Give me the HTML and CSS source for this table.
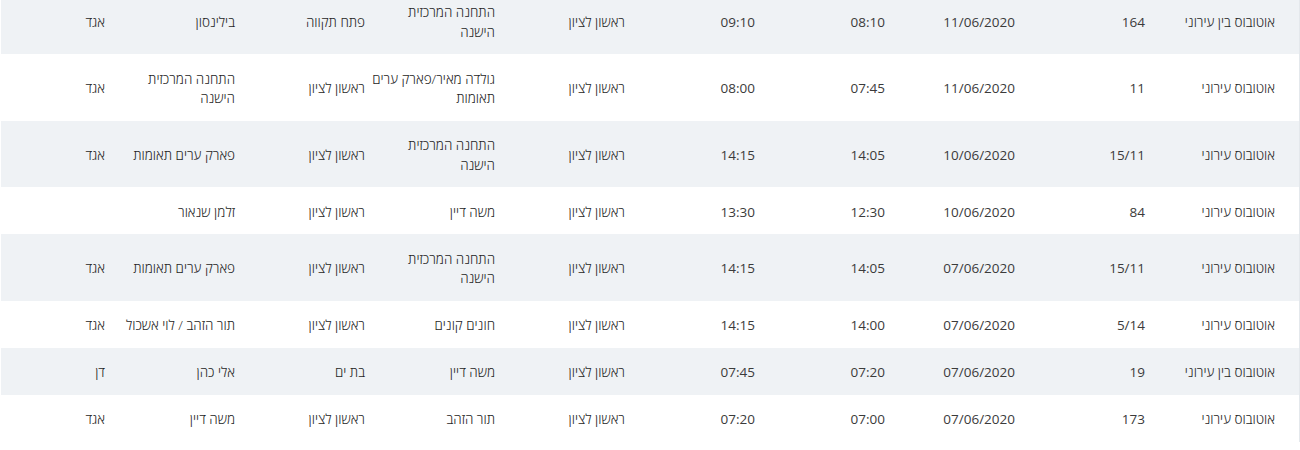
FILE: index.html
```html
<!DOCTYPE html>
<html lang="he" dir="rtl">
<head>
<meta charset="utf-8">
<title>נסיעות</title>
<link rel="stylesheet" href="styles.css">
</head>
<body>
<div class="table-wrap">
<table class="trips">
<colgroup>
<col class="c-first"><col class="c"><col class="c"><col class="c"><col class="c"><col class="c"><col class="c"><col class="c"><col class="c"><col class="c">
</colgroup>
<tbody>
<tr><td>אוטובוס בין עירוני</td><td class="num">164</td><td class="num">11/06/2020</td><td class="num">08:10</td><td class="num">09:10</td><td>ראשון לציון</td><td>התחנה המרכזית הישנה</td><td>פתח תקווה</td><td>בילינסון</td><td>אגד</td></tr>
<tr><td>אוטובוס עירוני</td><td class="num">11</td><td class="num">11/06/2020</td><td class="num">07:45</td><td class="num">08:00</td><td>ראשון לציון</td><td>גולדה מאיר/פארק ערים תאומות</td><td>ראשון לציון</td><td>התחנה המרכזית הישנה</td><td>אגד</td></tr>
<tr><td>אוטובוס עירוני</td><td class="num">15/11</td><td class="num">10/06/2020</td><td class="num">14:05</td><td class="num">14:15</td><td>ראשון לציון</td><td>התחנה המרכזית הישנה</td><td>ראשון לציון</td><td>פארק ערים תאומות</td><td>אגד</td></tr>
<tr><td>אוטובוס עירוני</td><td class="num">84</td><td class="num">10/06/2020</td><td class="num">12:30</td><td class="num">13:30</td><td>ראשון לציון</td><td>משה דיין</td><td>ראשון לציון</td><td>זלמן שנאור</td><td></td></tr>
<tr><td>אוטובוס עירוני</td><td class="num">15/11</td><td class="num">07/06/2020</td><td class="num">14:05</td><td class="num">14:15</td><td>ראשון לציון</td><td>התחנה המרכזית הישנה</td><td>ראשון לציון</td><td>פארק ערים תאומות</td><td>אגד</td></tr>
<tr><td>אוטובוס עירוני</td><td class="num">5/14</td><td class="num">07/06/2020</td><td class="num">14:00</td><td class="num">14:15</td><td>ראשון לציון</td><td>חונים קונים</td><td>ראשון לציון</td><td>תור הזהב / לוי אשכול</td><td>אגד</td></tr>
<tr><td>אוטובוס בין עירוני</td><td class="num">19</td><td class="num">07/06/2020</td><td class="num">07:20</td><td class="num">07:45</td><td>ראשון לציון</td><td>משה דיין</td><td>בת ים</td><td>אלי כהן</td><td>דן</td></tr>
<tr><td>אוטובוס עירוני</td><td class="num">173</td><td class="num">07/06/2020</td><td class="num">07:00</td><td class="num">07:20</td><td>ראשון לציון</td><td>תור הזהב</td><td>ראשון לציון</td><td>משה דיין</td><td>אגד</td></tr>
</tbody>
</table>
</div>
</body>
</html>
```
FILE: styles.css
```css
html, body {
  margin: 0;
  padding: 0;
  background: #ffffff;
}

body {
  font-family: "Open Sans", "Noto Sans", sans-serif;
  font-size: 13.5px;
  font-weight: 300;
  color: #262626;
  direction: rtl;
  overflow: hidden;
}

.table-wrap {
  width: 1298px;
  border-right: 1px solid #e4e8ec;
  overflow: hidden;
  margin-top: -12.5px;
  direction: ltr;
}

.trips {
  direction: rtl;
  table-layout: fixed;
  width: 1320px;
  margin-left: -22px;
  border-collapse: collapse;
}

.c-first { width: 150px; }
.c { width: 130px; }

.trips td {
  padding: 15.5px 4px 12px 2px;
  line-height: 19.5px;
  text-align: right;
  vertical-align: middle;
}

.trips td.num {
  font-weight: 400;
  color: #3b3b3b;
}

.trips td:first-child {
  padding-right: 24px;
}

.trips tr:nth-child(odd) {
  background: #eff2f5;
}
```
